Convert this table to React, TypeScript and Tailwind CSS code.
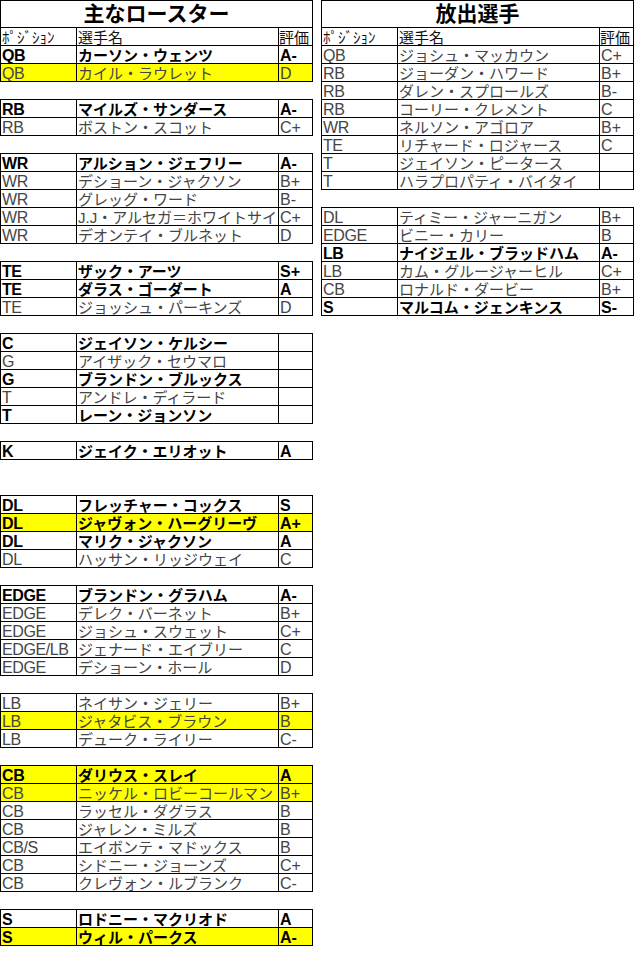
import React from "react";

type Row = { p: string; n: string; g: string; b?: boolean; y?: boolean };

const leftGroups: { gap: number; rows: Row[] }[] = [
  {
    gap: 0,
    rows: [
      { p: "QB", n: "カーソン・ウェンツ", g: "A-", b: true },
      { p: "QB", n: "カイル・ラウレット", g: "D", y: true },
    ],
  },
  {
    gap: 17,
    rows: [
      { p: "RB", n: "マイルズ・サンダース", g: "A-", b: true },
      { p: "RB", n: "ボストン・スコット", g: "C+" },
    ],
  },
  {
    gap: 17,
    rows: [
      { p: "WR", n: "アルション・ジェフリー", g: "A-", b: true },
      { p: "WR", n: "デショーン・ジャクソン", g: "B+" },
      { p: "WR", n: "グレッグ・ワード", g: "B-" },
      { p: "WR", n: "J.J・アルセガ＝ホワイトサイ", g: "C+" },
      { p: "WR", n: "デオンテイ・ブルネット", g: "D" },
    ],
  },
  {
    gap: 17,
    rows: [
      { p: "TE", n: "ザック・アーツ", g: "S+", b: true },
      { p: "TE", n: "ダラス・ゴーダート", g: "A", b: true },
      { p: "TE", n: "ジョッシュ・パーキンズ", g: "D" },
    ],
  },
  {
    gap: 17,
    rows: [
      { p: "C", n: "ジェイソン・ケルシー", g: "", b: true },
      { p: "G", n: "アイザック・セウマロ", g: "" },
      { p: "G", n: "ブランドン・ブルックス", g: "", b: true },
      { p: "T", n: "アンドレ・ディラード", g: "" },
      { p: "T", n: "レーン・ジョンソン", g: "", b: true },
    ],
  },
  {
    gap: 17,
    rows: [{ p: "K", n: "ジェイク・エリオット", g: "A", b: true }],
  },
  {
    gap: 35,
    rows: [
      { p: "DL", n: "フレッチャー・コックス", g: "S", b: true },
      { p: "DL", n: "ジャヴォン・ハーグリーヴ", g: "A+", b: true, y: true },
      { p: "DL", n: "マリク・ジャクソン", g: "A", b: true },
      { p: "DL", n: "ハッサン・リッジウェイ", g: "C" },
    ],
  },
  {
    gap: 17,
    rows: [
      { p: "EDGE", n: "ブランドン・グラハム", g: "A-", b: true },
      { p: "EDGE", n: "デレク・バーネット", g: "B+" },
      { p: "EDGE", n: "ジョシュ・スウェット", g: "C+" },
      { p: "EDGE/LB", n: "ジェナード・エイブリー", g: "C" },
      { p: "EDGE", n: "デショーン・ホール", g: "D" },
    ],
  },
  {
    gap: 17,
    rows: [
      { p: "LB", n: "ネイサン・ジェリー", g: "B+" },
      { p: "LB", n: "ジャタビス・ブラウン", g: "B", y: true },
      { p: "LB", n: "デューク・ライリー", g: "C-" },
    ],
  },
  {
    gap: 17,
    rows: [
      { p: "CB", n: "ダリウス・スレイ", g: "A", b: true, y: true },
      { p: "CB", n: "ニッケル・ロビーコールマン", g: "B+", y: true },
      { p: "CB", n: "ラッセル・ダグラス", g: "B" },
      { p: "CB", n: "ジャレン・ミルズ", g: "B" },
      { p: "CB/S", n: "エイボンテ・マドックス", g: "B" },
      { p: "CB", n: "シドニー・ジョーンズ", g: "C+" },
      { p: "CB", n: "クレヴォン・ルブランク", g: "C-" },
    ],
  },
  {
    gap: 17,
    rows: [
      { p: "S", n: "ロドニー・マクリオド", g: "A", b: true },
      { p: "S", n: "ウィル・パークス", g: "A-", b: true, y: true },
    ],
  },
];

const rightGroups: { gap: number; rows: Row[] }[] = [
  {
    gap: 0,
    rows: [
      { p: "QB", n: "ジョシュ・マッカウン", g: "C+" },
      { p: "RB", n: "ジョーダン・ハワード", g: "B+" },
      { p: "RB", n: "ダレン・スプロールズ", g: "B-" },
      { p: "RB", n: "コーリー・クレメント", g: "C" },
      { p: "WR", n: "ネルソン・アゴロア", g: "B+" },
      { p: "TE", n: "リチャード・ロジャース", g: "C" },
      { p: "T", n: "ジェイソン・ピータース", g: "" },
      { p: "T", n: "ハラプロパティ・バイタイ", g: "" },
    ],
  },
  {
    gap: 17,
    rows: [
      { p: "DL", n: "ティミー・ジャーニガン", g: "B+" },
      { p: "EDGE", n: "ビニー・カリー", g: "B" },
      { p: "LB", n: "ナイジェル・ブラッドハム", g: "A-", b: true },
      { p: "LB", n: "カム・グルージャーヒル", g: "C+" },
      { p: "CB", n: "ロナルド・ダービー", g: "B+" },
      { p: "S", n: "マルコム・ジェンキンス", g: "S-", b: true },
    ],
  },
];

function DataRow({ r }: { r: Row }) {
  const tone = r.b ? "font-bold text-black" : "font-normal text-[#454545]";
  const bg = r.y ? "bg-[#ffff00]" : "bg-white";
  return (
    <div className={`flex h-[18px] border-b border-black text-[15px] leading-[19px] ${bg} ${tone}`}>
      <div className="w-[76px] shrink-0 overflow-hidden whitespace-nowrap border-r border-black pl-px text-[16px] tracking-[-0.4px]">{r.p}</div>
      <div className="w-[202px] shrink-0 overflow-hidden whitespace-nowrap border-r border-black pl-px">{r.n}</div>
      <div className="w-[34px] shrink-0 overflow-hidden whitespace-nowrap border-r border-black pl-px text-[16px]">{r.g}</div>
    </div>
  );
}

function Table({ title, groups }: { title: string; groups: { gap: number; rows: Row[] }[] }) {
  return (
    <div className="flex w-[313px] shrink-0 flex-col">
      {groups.map((g, i) => (
        <div
          key={i}
          className={`flex flex-col border-l border-t border-black ${g.gap === 35 ? "mt-[35px]" : g.gap === 17 ? "mt-[17px]" : "mt-0"}`}
        >
          {i === 0 && (
            <>
              <div className="flex h-[27px] items-center justify-center border-b border-r border-black text-[21px] font-bold leading-[26px] text-black">
                {title}
              </div>
              <div className="flex h-[18px] border-b border-black text-[15px] leading-[19px] text-[#111]">
                <div className="w-[76px] shrink-0 overflow-hidden whitespace-nowrap border-r border-black pl-px">ﾎﾟｼﾞｼｮﾝ</div>
                <div className="w-[202px] shrink-0 border-r border-black pl-px">選手名</div>
                <div className="w-[34px] shrink-0 overflow-hidden whitespace-nowrap border-r border-black">評価</div>
              </div>
            </>
          )}
          {g.rows.map((r, j) => (
            <DataRow key={j} r={r} />
          ))}
        </div>
      ))}
    </div>
  );
}

export default function App() {
  return (
    <div
      className="flex h-[966px] w-[636px] items-start gap-2 bg-white"
      style={{ fontFamily: '"Liberation Sans", "Noto Sans CJK JP", sans-serif' }}
    >
      <Table title="主なロースター" groups={leftGroups} />
      <Table title="放出選手" groups={rightGroups} />
    </div>
  );
}
